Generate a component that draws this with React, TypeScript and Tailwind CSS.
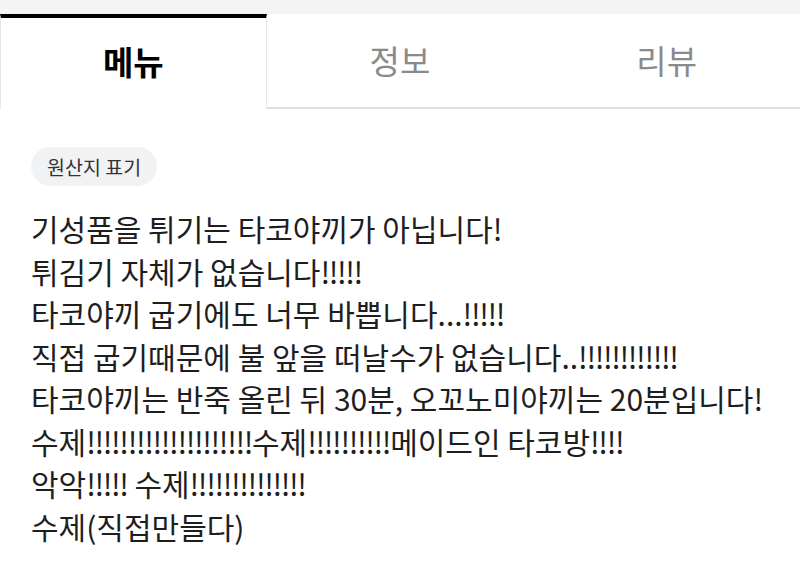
const TABS = ["메뉴", "정보", "리뷰"];

const LINES = [
  "기성품을 튀기는 타코야끼가 아닙니다!",
  "튀김기 자체가 없습니다!!!!!",
  "타코야끼 굽기에도 너무 바쁩니다...!!!!!",
  "직접 굽기때문에 불 앞을 떠날수가 없습니다..!!!!!!!!!!!!",
  "타코야끼는 반죽 올린 뒤 30분, 오꼬노미야끼는 20분입니다!",
  "수제!!!!!!!!!!!!!!!!!!!!수제!!!!!!!!!!메이드인 타코방!!!!",
  "악악!!!!! 수제!!!!!!!!!!!!!!",
  "수제(직접만들다)",
];

// The source font draws "!" narrower than Noto CJK, so runs of them get tightened.
function Line({ text }: { text: string }) {
  const parts = text.split(/(!{2,})/);
  return (
    <div className="whitespace-nowrap">
      {parts.map((p, i) =>
        /^!{2,}$/.test(p) ? (
          <span key={i} className="tracking-[-1.4px]">
            {p}
          </span>
        ) : (
          <span key={i}>{p}</span>
        )
      )}
    </div>
  );
}

function Tabs() {
  return (
    <div className="flex bg-[#f4f4f4] pt-[14px]">
      {TABS.map((t, i) =>
        i === 0 ? (
          <div
            key={t}
            className="flex h-[95px] w-1/3 items-center justify-center border-t-4 border-l border-r border-t-black border-l-[#e6e6e6] border-r-[#e6e6e6] bg-white pb-[4px] text-[33px] font-bold text-black"
          >
            {t}
          </div>
        ) : (
          <div
            key={t}
            className="flex h-[95px] w-1/3 items-center justify-center border-b-2 border-[#dedede] bg-white text-[33px] text-[#8a8a8a]"
          >
            {t}
          </div>
        )
      )}
    </div>
  );
}

export default function App() {
  return (
    <div
      className="h-[561px] w-[800px] overflow-hidden bg-white"
      style={{ fontFamily: '"Noto Sans CJK KR", "Noto Sans", sans-serif' }}
    >
      <Tabs />
      <div className="px-[31px] pt-[38px]">
        <span className="inline-flex h-[39px] items-center rounded-full bg-[#f1f2f4] px-[16px] text-[19.5px] text-[#333]">
          원산지 표기
        </span>
        <div className="mt-[21px] text-[30px] leading-[42.5px] text-[#1e1e1e]">
          {LINES.map((l) => (
            <Line key={l} text={l} />
          ))}
        </div>
      </div>
    </div>
  );
}
